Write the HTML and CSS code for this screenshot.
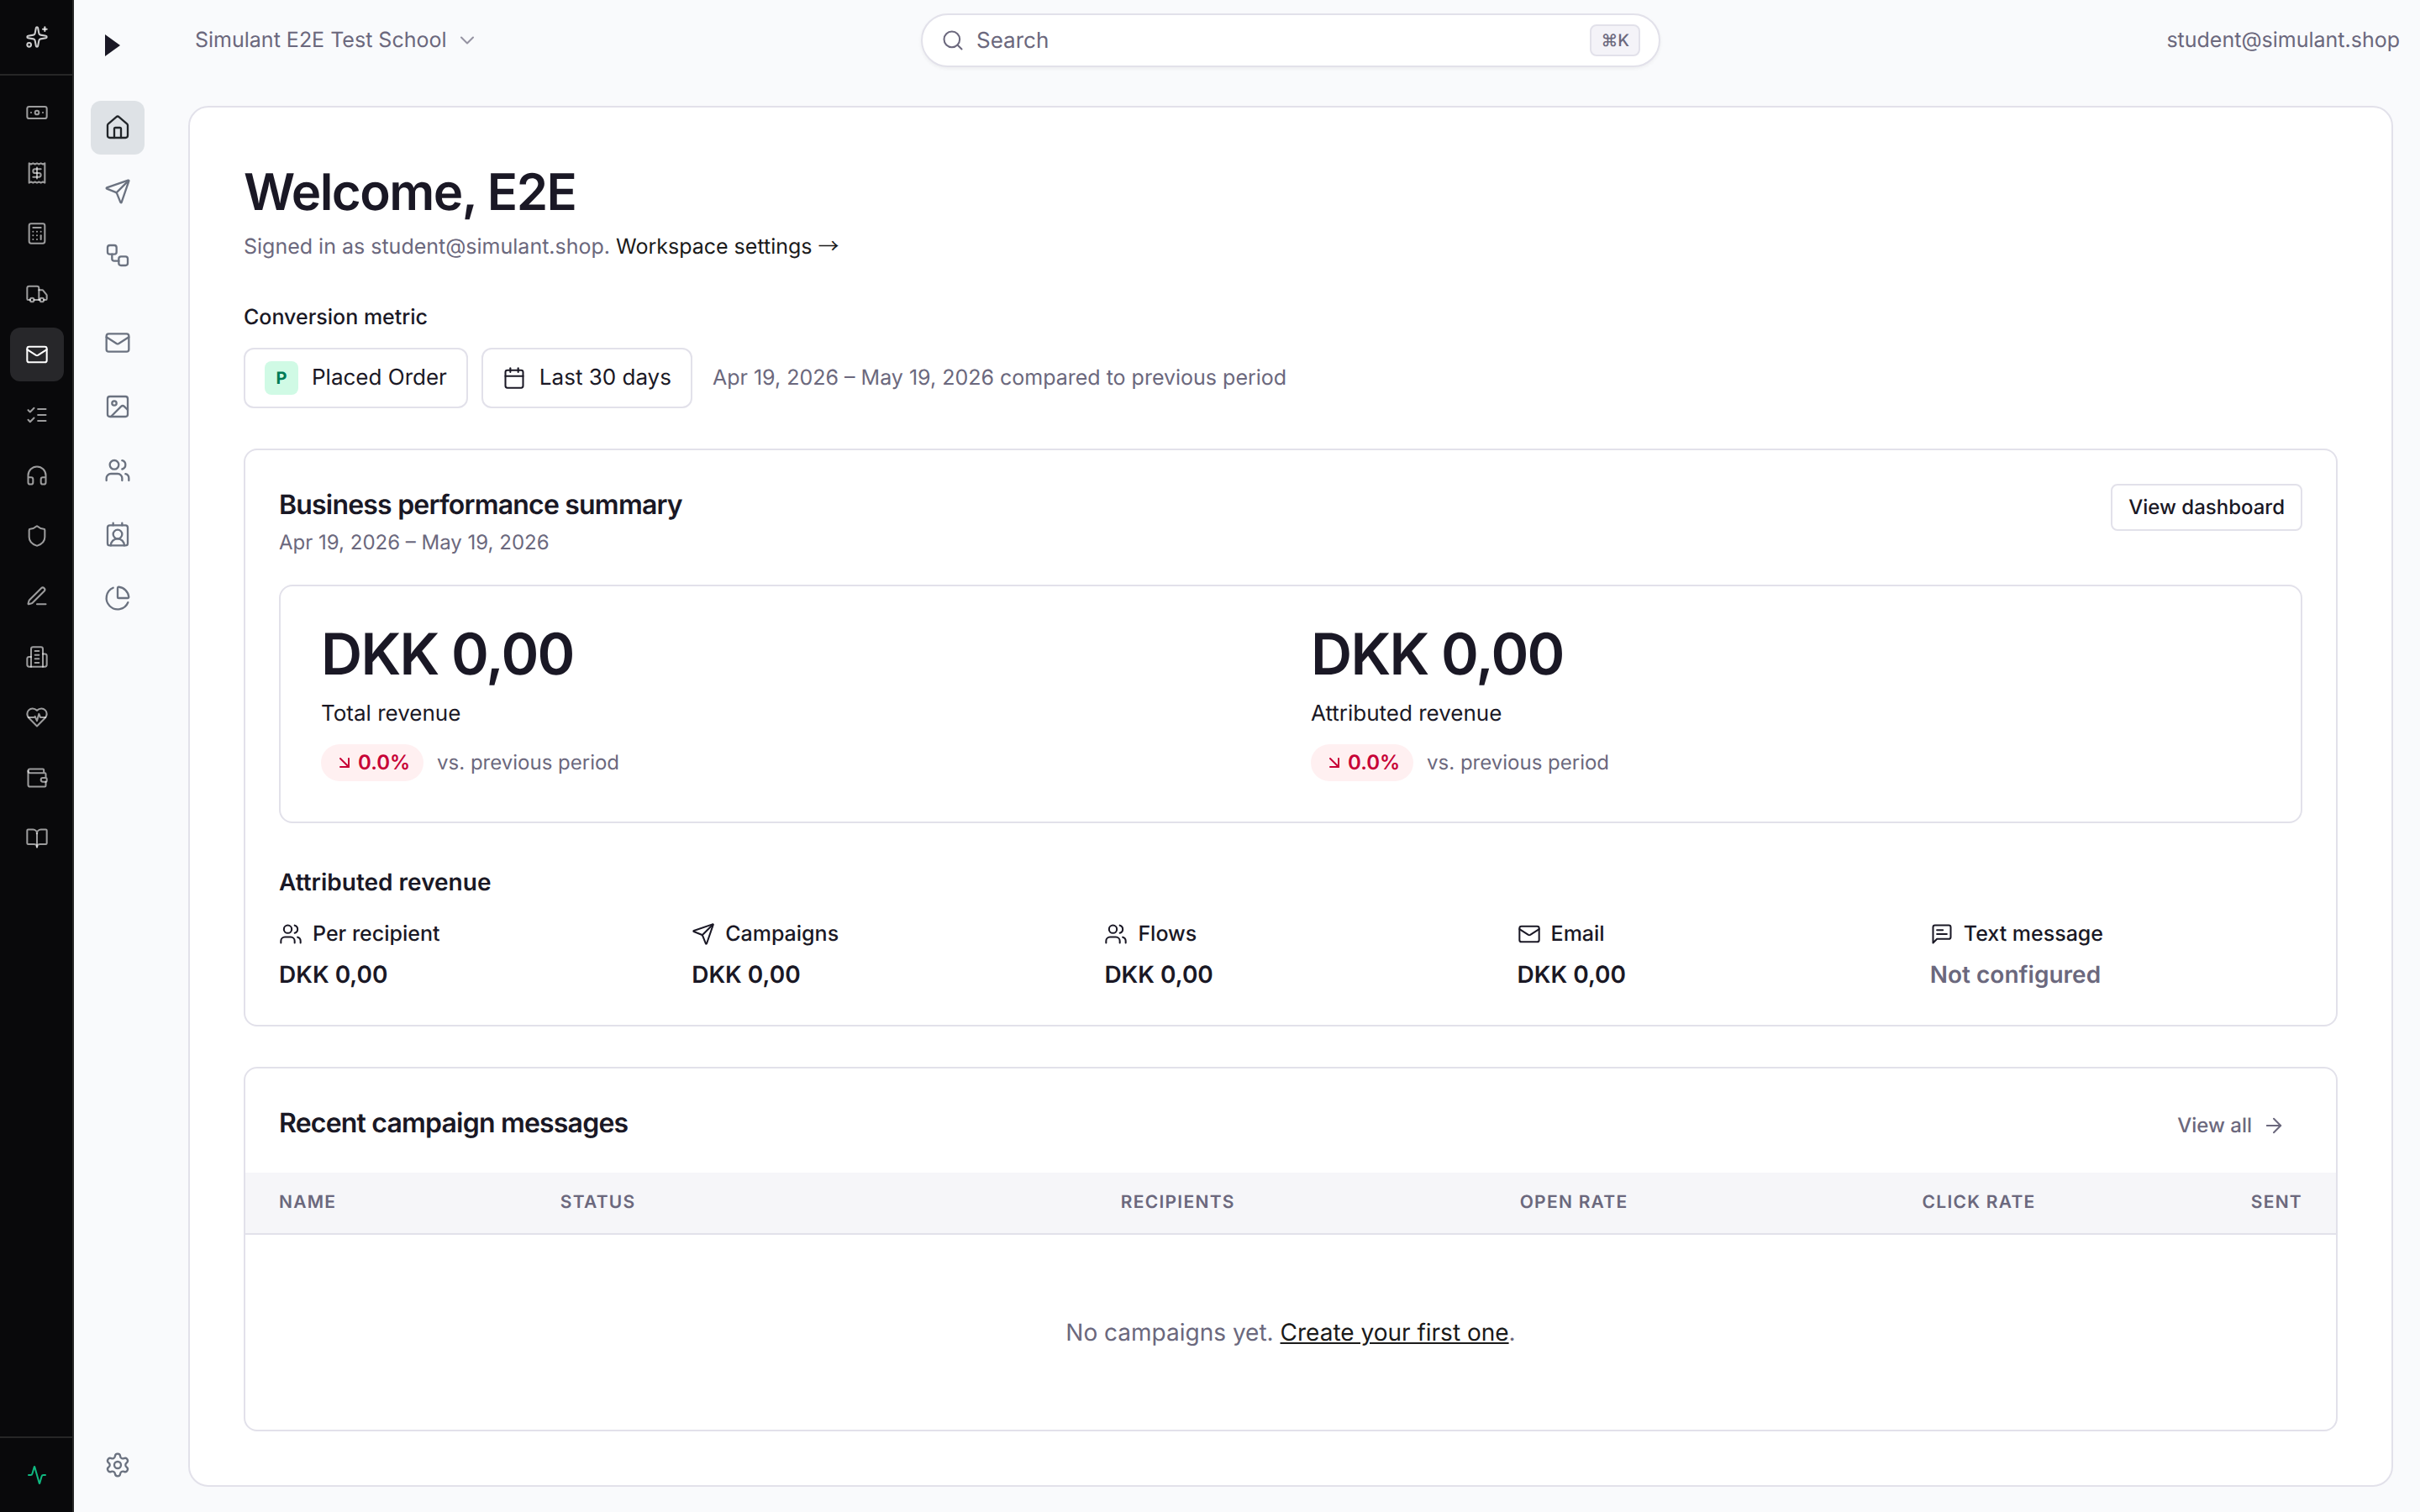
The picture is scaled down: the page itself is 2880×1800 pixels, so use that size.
FILE: index.html
```html
<!DOCTYPE html>
<html lang="en">
    <head>
        <meta charset="UTF-8">
        <meta name="viewport" content="width=device-width, initial-scale=1">
        <title>Home - Simulant E2E Test School</title>
        <link rel="stylesheet" href="styles.css">
    </head>
    <body>
        <!-- Icons used more than once -->
        <svg class="sprite" aria-hidden="true">
            <symbol id="mail" viewBox="0 0 24 24"><rect x="2" y="4" width="20" height="16" rx="2"/><path d="m22 7-8.991 5.727a2 2 0 0 1-2.009 0L2 7"/></symbol>
            <symbol id="users" viewBox="0 0 24 24"><path d="M16 21v-2a4 4 0 0 0-4-4H6a4 4 0 0 0-4 4v2"/><path d="M16 3.128a4 4 0 0 1 0 7.744"/><path d="M22 21v-2a4 4 0 0 0-3-3.87"/><circle cx="9" cy="7" r="4"/></symbol>
            <symbol id="send" viewBox="0 0 24 24"><path d="M14.536 21.686a.5.5 0 0 0 .937-.024l6.5-19a.496.496 0 0 0-.635-.635l-19 6.5a.5.5 0 0 0-.024.937l7.93 3.18a2 2 0 0 1 1.112 1.11z"/><path d="m21.854 2.147-10.94 10.939"/></symbol>
            <symbol id="down-right" viewBox="0 0 24 24"><path d="m7 7 10 10"/><path d="M17 7v10H7"/></symbol>
        </svg>

        <div class="app">
            <nav class="rail" aria-label="Apps">
                <a class="rail-top" href="#" aria-label="Assistant">
                    <svg class="icon" viewBox="0 0 24 24"><path d="M11.017 2.814a1 1 0 0 1 1.966 0l1.051 5.558a2 2 0 0 0 1.594 1.594l5.558 1.051a1 1 0 0 1 0 1.966l-5.558 1.051a2 2 0 0 0-1.594 1.594l-1.051 5.558a1 1 0 0 1-1.966 0l-1.051-5.558a2 2 0 0 0-1.594-1.594l-5.558-1.051a1 1 0 0 1 0-1.966l5.558-1.051a2 2 0 0 0 1.594-1.594z"/><path d="M20 2v4"/><path d="M22 4h-4"/><circle cx="4" cy="20" r="2"/></svg>
                </a>
                <div class="rail-items">
                    <a class="rail-item" href="#" aria-label="Payments">
                        <svg class="icon" viewBox="0 0 24 24"><rect x="2" y="6" width="20" height="12" rx="2"/><circle cx="12" cy="12" r="2"/><path d="M6 12h.01M18 12h.01"/></svg>
                    </a>
                    <a class="rail-item" href="#" aria-label="Receipts">
                        <svg class="icon" viewBox="0 0 24 24"><path d="M4 2v20l2-1 2 1 2-1 2 1 2-1 2 1 2-1 2 1V2l-2 1-2-1-2 1-2-1-2 1-2-1-2 1Z"/><path d="M16 8h-6a2 2 0 1 0 0 4h4a2 2 0 1 1 0 4H8"/><path d="M12 17.5v-11"/></svg>
                    </a>
                    <a class="rail-item" href="#" aria-label="Accounting">
                        <svg class="icon" viewBox="0 0 24 24"><rect x="4" y="2" width="16" height="20" rx="2"/><path d="M8 6h8"/><path d="M16 14v4"/><path d="M16 10h.01M12 10h.01M8 10h.01M12 14h.01M8 14h.01M12 18h.01M8 18h.01"/></svg>
                    </a>
                    <a class="rail-item" href="#" aria-label="Shipping">
                        <svg class="icon" viewBox="0 0 24 24"><path d="M14 18V6a2 2 0 0 0-2-2H4a2 2 0 0 0-2 2v11a1 1 0 0 0 1 1h2"/><path d="M15 18H9"/><path d="M19 18h2a1 1 0 0 0 1-1v-3.65a1 1 0 0 0-.22-.624l-3.48-4.35A1 1 0 0 0 17.52 8H14"/><circle cx="17" cy="18" r="2"/><circle cx="7" cy="18" r="2"/></svg>
                    </a>
                    <a class="rail-item active" href="#" aria-label="Email marketing" aria-current="page">
                        <svg class="icon"><use href="#mail"/></svg>
                    </a>
                    <a class="rail-item" href="#" aria-label="Tasks">
                        <svg class="icon" viewBox="0 0 24 24"><path d="m3 17 2 2 4-4"/><path d="m3 7 2 2 4-4"/><path d="M13 6h8"/><path d="M13 12h8"/><path d="M13 18h8"/></svg>
                    </a>
                    <a class="rail-item" href="#" aria-label="Support">
                        <svg class="icon" viewBox="0 0 24 24"><path d="M3 14h3a2 2 0 0 1 2 2v3a2 2 0 0 1-2 2H5a2 2 0 0 1-2-2v-7a9 9 0 0 1 18 0v7a2 2 0 0 1-2 2h-1a2 2 0 0 1-2-2v-3a2 2 0 0 1 2-2h3"/></svg>
                    </a>
                    <a class="rail-item" href="#" aria-label="Security">
                        <svg class="icon" viewBox="0 0 24 24"><path d="M20 13c0 5-3.5 7.5-7.66 8.95a1 1 0 0 1-.67-.01C7.5 20.5 4 18 4 13V6a1 1 0 0 1 1-1c2 0 4.5-1.2 6.24-2.72a1.17 1.17 0 0 1 1.52 0C14.51 3.81 17 5 19 5a1 1 0 0 1 1 1z"/></svg>
                    </a>
                    <a class="rail-item" href="#" aria-label="Editor">
                        <svg class="icon" viewBox="0 0 24 24"><path d="M12 20h9"/><path d="M16.376 3.622a1 1 0 0 1 3.002 3.002L7.368 18.635a2 2 0 0 1-.855.506l-2.872.838a.5.5 0 0 1-.62-.62l.838-2.872a2 2 0 0 1 .506-.854z"/></svg>
                    </a>
                    <a class="rail-item" href="#" aria-label="Company">
                        <svg class="icon" viewBox="0 0 24 24"><path d="M6 22V4a2 2 0 0 1 2-2h8a2 2 0 0 1 2 2v18Z"/><path d="M6 12H4a2 2 0 0 0-2 2v6a2 2 0 0 0 2 2h2"/><path d="M18 9h2a2 2 0 0 1 2 2v9a2 2 0 0 1-2 2h-2"/><path d="M10 6h4"/><path d="M10 10h4"/><path d="M10 14h4"/><path d="M10 18h4"/></svg>
                    </a>
                    <a class="rail-item" href="#" aria-label="Health">
                        <svg class="icon" viewBox="0 0 24 24"><path d="M19 14c1.49-1.46 3-3.21 3-5.5A5.5 5.5 0 0 0 16.5 3c-1.76 0-3 .5-4.5 2-1.5-1.5-2.74-2-4.5-2A5.5 5.5 0 0 0 2 8.5c0 2.3 1.5 4.05 3 5.5l7 7Z"/><path d="M3.22 12H9.5l.5-1 2 4.5 2-7 1.5 3.5h5.27"/></svg>
                    </a>
                    <a class="rail-item" href="#" aria-label="Wallet">
                        <svg class="icon" viewBox="0 0 24 24"><path d="M19 7V4a1 1 0 0 0-1-1H5a2 2 0 0 0 0 4h15a1 1 0 0 1 1 1v4h-3a2 2 0 0 0 0 4h3a1 1 0 0 0 1-1v-2a1 1 0 0 0-1-1"/><path d="M3 5v14a2 2 0 0 0 2 2h15a1 1 0 0 0 1-1v-4"/></svg>
                    </a>
                    <a class="rail-item" href="#" aria-label="Library">
                        <svg class="icon" viewBox="0 0 24 24"><path d="M12 7v14"/><path d="M3 18a1 1 0 0 1-1-1V4a1 1 0 0 1 1-1h5a4 4 0 0 1 4 4 4 4 0 0 1 4-4h5a1 1 0 0 1 1 1v13a1 1 0 0 1-1 1h-6a3 3 0 0 0-3 3 3 3 0 0 0-3-3z"/></svg>
                    </a>
                </div>
                <a class="rail-bottom" href="#" aria-label="Status">
                    <svg class="icon icon-small" viewBox="0 0 24 24"><path d="M22 12h-2.48a2 2 0 0 0-1.93 1.46l-2.35 8.36a.25.25 0 0 1-.48 0L9.24 2.18a.25.25 0 0 0-.48 0l-2.35 8.36A2 2 0 0 1 4.49 12H2"/></svg>
                </a>
            </nav>

            <nav class="sidebar" aria-label="Main">
                <a class="logo" href="#" aria-label="Home">
                    <svg class="logo-mark" viewBox="0 0 18 26"><path d="M0 0l18 13L0 26z"/></svg>
                </a>
                <div class="side-group">
                    <a class="side-item active" href="#" aria-label="Home" aria-current="page">
                        <svg class="icon icon-large" viewBox="0 0 24 24"><path d="M15 21v-8a1 1 0 0 0-1-1h-4a1 1 0 0 0-1 1v8"/><path d="M3 10a2 2 0 0 1 .709-1.528l7-5.999a2 2 0 0 1 2.582 0l7 5.999A2 2 0 0 1 21 10v9a2 2 0 0 1-2 2H5a2 2 0 0 1-2-2z"/></svg>
                    </a>
                    <a class="side-item" href="#" aria-label="Campaigns">
                        <svg class="icon icon-large"><use href="#send"/></svg>
                    </a>
                    <a class="side-item" href="#" aria-label="Flows">
                        <svg class="icon icon-large" viewBox="0 0 24 24"><rect x="3" y="3" width="8" height="8" rx="2"/><path d="M7 11v4a2 2 0 0 0 2 2h4"/><rect x="13" y="13" width="8" height="8" rx="2"/></svg>
                    </a>
                </div>
                <div class="side-group">
                    <a class="side-item" href="#" aria-label="Templates">
                        <svg class="icon icon-large"><use href="#mail"/></svg>
                    </a>
                    <a class="side-item" href="#" aria-label="Images">
                        <svg class="icon icon-large" viewBox="0 0 24 24"><rect x="3" y="3" width="18" height="18" rx="2"/><circle cx="9" cy="9" r="2"/><path d="m21 15-3.086-3.086a2 2 0 0 0-2.828 0L6 21"/></svg>
                    </a>
                    <a class="side-item" href="#" aria-label="Lists and segments">
                        <svg class="icon icon-large"><use href="#users"/></svg>
                    </a>
                    <a class="side-item" href="#" aria-label="Profiles">
                        <svg class="icon icon-large" viewBox="0 0 24 24"><path d="M16 2v2"/><path d="M17.915 22a6 6 0 0 0-12 0"/><path d="M8 2v2"/><circle cx="12" cy="12" r="4"/><rect x="3" y="4" width="18" height="18" rx="2"/></svg>
                    </a>
                    <a class="side-item" href="#" aria-label="Analytics">
                        <svg class="icon icon-large" viewBox="0 0 24 24"><path d="M21 12c.552 0 1.005-.449.95-.998a10 10 0 0 0-8.953-8.951c-.55-.055-.998.398-.998.95v8a1 1 0 0 0 1 1z"/><path d="M21.21 15.89A10 10 0 1 1 8 2.83"/></svg>
                    </a>
                </div>
                <a class="side-item side-settings" href="#" aria-label="Settings">
                    <svg class="icon icon-large" viewBox="0 0 24 24"><path d="M9.671 4.136a2.34 2.34 0 0 1 4.659 0 2.34 2.34 0 0 0 3.319 1.915 2.34 2.34 0 0 1 2.33 4.033 2.34 2.34 0 0 0 0 3.831 2.34 2.34 0 0 1-2.33 4.033 2.34 2.34 0 0 0-3.319 1.915 2.34 2.34 0 0 1-4.659 0 2.34 2.34 0 0 0-3.32-1.915 2.34 2.34 0 0 1-2.33-4.033 2.34 2.34 0 0 0 0-3.831A2.34 2.34 0 0 1 6.35 6.051a2.34 2.34 0 0 0 3.319-1.915"/><circle cx="12" cy="12" r="3"/></svg>
                </a>
            </nav>

            <div class="page">
                <header class="topbar">
                    <button class="org-switcher" type="button">
                        Simulant E2E Test School
                        <svg class="icon" viewBox="0 0 24 24"><path d="m6 9 6 6 6-6"/></svg>
                    </button>
                    <label class="search">
                        <svg class="icon" viewBox="0 0 24 24"><path d="m21 21-4.34-4.34"/><circle cx="11" cy="11" r="8"/></svg>
                        <input class="search-input" type="search" placeholder="Search" aria-label="Search">
                        <kbd class="search-key">⌘K</kbd>
                    </label>
                    <span class="account">student@simulant.shop</span>
                </header>

                <main class="content">
                    <h1 class="title">Welcome, E2E</h1>
                    <p class="signed-in">Signed in as student@simulant.shop. <a href="#">Workspace settings <span class="arrow">→</span></a></p>

                    <h2 class="filter-label" id="metric-label">Conversion metric</h2>
                    <div class="filters">
                        <button class="filter" type="button" aria-describedby="metric-label"><span class="metric-badge">P</span>Placed Order</button>
                        <button class="filter" type="button">
                            <svg class="icon" viewBox="0 0 24 24"><path d="M8 2v4"/><path d="M16 2v4"/><rect x="3" y="4" width="18" height="18" rx="2"/><path d="M3 10h18"/></svg>
                            Last 30 days
                        </button>
                        <span class="filter-note">Apr 19, 2026 – May 19, 2026 compared to previous period</span>
                    </div>

                    <section class="card summary">
                        <div class="card-head">
                            <div>
                                <h2 class="card-title">Business performance summary</h2>
                                <p class="card-dates">Apr 19, 2026 – May 19, 2026</p>
                            </div>
                            <button class="button" type="button">View dashboard</button>
                        </div>

                        <div class="totals">
                            <div>
                                <p class="total-value">DKK 0,00</p>
                                <p class="total-name">Total revenue</p>
                                <p class="total-change"><span class="pill"><svg class="icon icon-small"><use href="#down-right"/></svg>0.0%</span>vs. previous period</p>
                            </div>
                            <div>
                                <p class="total-value">DKK 0,00</p>
                                <p class="total-name">Attributed revenue</p>
                                <p class="total-change"><span class="pill"><svg class="icon icon-small"><use href="#down-right"/></svg>0.0%</span>vs. previous period</p>
                            </div>
                        </div>

                        <h3 class="channels-title">Attributed revenue</h3>
                        <dl class="channels">
                            <div>
                                <dt><svg class="icon"><use href="#users"/></svg>Per recipient</dt>
                                <dd>DKK 0,00</dd>
                            </div>
                            <div>
                                <dt><svg class="icon"><use href="#send"/></svg>Campaigns</dt>
                                <dd>DKK 0,00</dd>
                            </div>
                            <div>
                                <dt><svg class="icon"><use href="#users"/></svg>Flows</dt>
                                <dd>DKK 0,00</dd>
                            </div>
                            <div>
                                <dt><svg class="icon"><use href="#mail"/></svg>Email</dt>
                                <dd>DKK 0,00</dd>
                            </div>
                            <div>
                                <dt><svg class="icon" viewBox="0 0 24 24"><path d="M21 15a2 2 0 0 1-2 2H7l-4 4V5a2 2 0 0 1 2-2h14a2 2 0 0 1 2 2z"/><path d="M13 8H7"/><path d="M17 12H7"/></svg>Text message</dt>
                                <dd class="muted">Not configured</dd>
                            </div>
                        </dl>
                    </section>

                    <section class="card">
                        <div class="card-head recent-head">
                            <h2 class="card-title">Recent campaign messages</h2>
                            <a class="view-all" href="#">
                                View all
                                <svg class="icon" viewBox="0 0 24 24"><path d="M5 12h14"/><path d="m12 5 7 7-7 7"/></svg>
                            </a>
                        </div>
                        <table class="campaigns">
                            <thead>
                                <tr>
                                    <th class="col-name">Name</th>
                                    <th class="col-status">Status</th>
                                    <th class="col-recipients">Recipients</th>
                                    <th class="col-open">Open rate</th>
                                    <th class="col-click">Click rate</th>
                                    <th class="col-sent">Sent</th>
                                </tr>
                            </thead>
                            <tbody>
                                <tr>
                                    <td class="empty" colspan="6">No campaigns yet. <a href="#">Create your first one</a>.</td>
                                </tr>
                            </tbody>
                        </table>
                    </section>
                </main>
            </div>
        </div>
    </body>
</html>
```

FILE: styles.css
```css
* {
    box-sizing: border-box;
}
body {
    margin: 0;
    font-family: Inter, "Liberation Sans", sans-serif;
    font-size: 26px;
    line-height: 40px;
    text-rendering: geometricPrecision;
    color: #1a1825;
    background-color: #f9fafc;
}
h1, h2, h3, p, dl, dd {
    margin: 0;
}
a {
    color: inherit;
    text-decoration: none;
}
button {
    font: inherit;
    color: inherit;
    background: none;
    border: none;
    padding: 0;
    cursor: pointer;
    text-rendering: inherit;
}
.sprite {
    display: none;
}
.icon {
    width: 28px;
    height: 28px;
    flex: none;
    fill: none;
    stroke: currentColor;
    stroke-width: 1.75;
    stroke-linecap: round;
    stroke-linejoin: round;
}
.icon-small {
    width: 24px;
    height: 24px;
    stroke-width: 2;
}
.icon-large {
    width: 32px;
    height: 32px;
}
.app {
    display: flex;
    min-height: 100vh;
}

/* Dark app rail */
.rail {
    display: flex;
    flex-direction: column;
    width: 88px;
    flex: none;
    background-color: #09090b;
    box-shadow: inset -2px 0 #262626;
    color: rgba(255, 255, 255, 0.6);
}
.rail-top,
.rail-bottom {
    display: flex;
    align-items: center;
    justify-content: center;
    height: 90px;
}
.rail-top {
    border-bottom: 2px solid #262626;
    color: rgba(255, 255, 255, 0.8);
}
.rail-bottom {
    border-top: 2px solid #262626;
    margin-top: auto;
    color: #10b981;
}
.rail-items {
    display: flex;
    flex-direction: column;
    gap: 8px;
    padding: 12px;
}
.rail-item,
.side-item {
    display: flex;
    align-items: center;
    justify-content: center;
    width: 64px;
    height: 64px;
    border-radius: 12px;
}
.rail-item.active {
    background-color: #27272a;
    color: #fff;
}

/* Light sidebar */
.sidebar {
    display: flex;
    flex-direction: column;
    align-items: center;
    width: 104px;
    flex: none;
    padding-bottom: 24px;
    color: #6b7280;
}
.logo {
    display: flex;
    align-items: center;
    width: 64px;
    height: 108px;
    margin-bottom: 12px;
    padding-left: 17px;
}
.logo-mark {
    width: 18px;
    height: 26px;
    fill: #1a1825;
}
.side-group {
    display: flex;
    flex-direction: column;
    gap: 12px;
    margin-bottom: 40px;
}
.side-item.active {
    background-color: #dee2e6;
    color: #212529;
}
.side-settings {
    margin-top: auto;
}

/* Top bar */
.page {
    display: flex;
    flex-direction: column;
    flex: 1;
    min-width: 0;
}
.topbar {
    display: grid;
    grid-template-columns: 1fr minmax(0, 880px) 1fr;
    align-items: center;
    height: 96px;
    padding: 0 24px;
    color: #6b687d;
}
.org-switcher {
    display: flex;
    align-items: center;
    justify-self: start;
    gap: 10px;
    padding: 0 16px;
    font-size: 25px;
}
.org-switcher .icon {
    opacity: 0.7;
}
.search {
    display: flex;
    align-items: center;
    gap: 14px;
    height: 64px;
    padding: 0 22px;
    background-color: #fff;
    border: 2px solid #e2e1ea;
    border-radius: 32px;
    box-shadow: 0 2px 4px rgba(0, 0, 0, 0.05);
}
.search-input {
    flex: 1;
    min-width: 0;
    padding: 2px 0 0;
    border: none;
    outline: none;
    background: none;
    font: inherit;
    text-rendering: inherit;
    color: #1a1825;
}
.search-input::placeholder {
    color: #6b687d;
    opacity: 1;
}
.search-key {
    padding: 0 11px;
    border: 2px solid #e2e1ea;
    border-radius: 8px;
    background-color: #f4f3f8;
    font-family: inherit;
    font-size: 20px;
    font-weight: 500;
    line-height: 34px;
}
.account {
    justify-self: end;
    font-size: 25px;
}

/* Main panel */
.content {
    flex: 1;
    margin: 30px 32px;
    padding: 64px;
    background-color: #fff;
    border: 2px solid #e2e1ea;
    border-radius: 24px;
}
.title {
    font-size: 60px;
    font-weight: 600;
    line-height: 74px;
    letter-spacing: -0.025em;
}
.signed-in {
    margin-top: 8px;
    font-size: 25px;
    color: #6b687d;
}
.signed-in a {
    color: #1a1a1a;
}
.arrow {
    font-family: "Noto Sans CJK JP", sans-serif;
    line-height: 1;
}
.filter-label {
    margin: 44px 0 16px;
    font-size: 25px;
    font-weight: 500;
}
.filters {
    display: flex;
    align-items: center;
    gap: 16px;
}
.filter {
    display: flex;
    align-items: center;
    gap: 16px;
    height: 72px;
    padding: 0 23px;
    border: 2px solid #e2e1ea;
    border-radius: 12px;
}
.metric-badge {
    width: 40px;
    height: 40px;
    border-radius: 8px;
    background-color: #d0fae5;
    color: #007a55;
    font-size: 20px;
    font-weight: 700;
    text-align: center;
}
.filter-note {
    margin-left: 8px;
    font-size: 25px;
    color: #6b687d;
}

/* Cards */
.card {
    margin-top: 48px;
    border: 2px solid #e2e1ea;
    border-radius: 16px;
    overflow: hidden;
}
.summary {
    padding: 40px;
}
.card-head {
    display: flex;
    align-items: flex-start;
    justify-content: space-between;
}
.card-title {
    font-size: 32px;
    font-weight: 600;
    line-height: 50px;
    letter-spacing: -0.025em;
}
.card-dates {
    margin-top: 2px;
    font-size: 24px;
    line-height: 36px;
    color: #6b687d;
}
.button {
    height: 56px;
    padding: 0 19px;
    border: 2px solid #e2e1ea;
    border-radius: 8px;
    font-size: 24px;
    font-weight: 500;
}
.totals {
    display: grid;
    grid-template-columns: 1fr 1fr;
    gap: 48px;
    margin: 32px 0 48px;
    padding: 48px;
    border: 2px solid #e2e1ea;
    border-radius: 16px;
}
.total-value {
    font-size: 68px;
    font-weight: 600;
    line-height: 66px;
    letter-spacing: -0.025em;
}
.total-name {
    margin: 18px 0 16px;
}
.total-change {
    display: flex;
    align-items: center;
    gap: 16px;
    font-size: 24px;
    color: #6b687d;
}
.pill {
    display: flex;
    align-items: center;
    gap: 4px;
    height: 44px;
    padding: 0 16px;
    border-radius: 22px;
    background-color: #fff0f1;
    color: #c70036;
    font-weight: 600;
}
.channels-title {
    font-size: 28px;
    font-weight: 600;
    line-height: 44px;
}
.channels {
    display: grid;
    grid-template-columns: repeat(5, 1fr);
    gap: 48px;
    margin-top: 20px;
}
.channels dt {
    display: flex;
    align-items: center;
    gap: 12px;
    font-size: 25px;
    font-weight: 500;
}
.channels dd {
    margin-top: 8px;
    font-size: 28px;
    font-weight: 600;
}
.channels .muted {
    color: #6b687d;
}

/* Recent campaigns */
.recent-head {
    padding: 40px 40px 28px;
}
.view-all {
    display: flex;
    align-items: center;
    gap: 12px;
    height: 56px;
    padding: 0 20px;
    font-size: 24px;
    font-weight: 500;
    color: #6b687d;
}
.campaigns {
    width: 100%;
    table-layout: fixed;
    border-collapse: separate;
    border-spacing: 0;
}
.campaigns th {
    height: 74px;
    padding: 0 24px;
    background-color: #f6f6f9;
    border-bottom: 2px solid #e2e1ea;
    color: #6b687d;
    font-size: 21px;
    font-weight: 600;
    letter-spacing: 0.06em;
    text-align: right;
    text-transform: uppercase;
}
.campaigns .col-name {
    width: 14.1%;
    padding-left: 40px;
    text-align: left;
}
.campaigns .col-status {
    width: 15%;
    text-align: left;
}
.campaigns .col-recipients {
    width: 19.2%;
}
.campaigns .col-open {
    width: 18.8%;
}
.campaigns .col-click {
    width: 19.5%;
}
.campaigns .col-sent {
    padding-right: 40px;
}
.campaigns .empty {
    padding: 96px 40px;
    font-size: 28px;
    text-align: center;
    color: #6b687d;
}
.campaigns .empty a {
    color: #1a1a1a;
    text-decoration: underline;
}
```
